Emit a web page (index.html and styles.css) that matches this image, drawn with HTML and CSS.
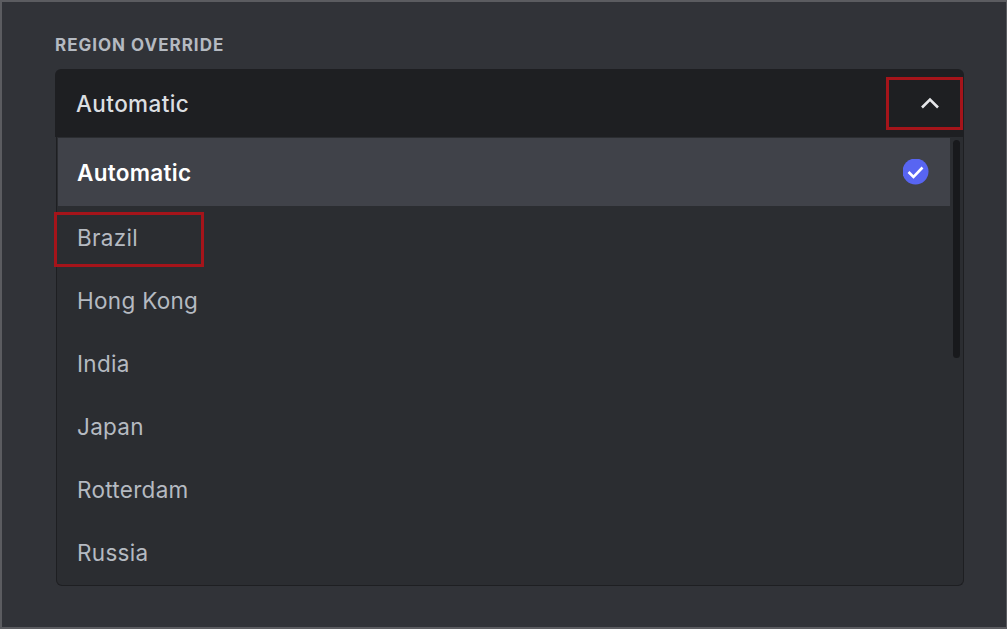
FILE: index.html
```html
<!DOCTYPE html>
<html lang="en">
<head>
  <meta charset="UTF-8" />
  <title>Region Override</title>
  <link rel="stylesheet" href="styles.css">
</head>
<body>
  <div class="Frame">
    <h2 class="Label">REGION OVERRIDE</h2>
    <div class="Select">
      <div class="Header">
        <span>Automatic</span>
        <svg class="Chevron" width="24" height="24" viewBox="0 0 24 24">
          <path d="M3 16.5 11 8.5 19 16.5" fill="none" stroke="#e6e7ea" stroke-width="2.6" />
        </svg>
      </div>
      <div class="List">
        <div class="Option selected">
          <span>Automatic</span>
          <svg width="26" height="26" viewBox="0 0 26 26">
            <circle cx="12.5" cy="12.5" r="13" fill="#5865f2" />
            <path d="M5.5 13 10.5 18 19.5 8.5" fill="none" stroke="#fff" stroke-width="2.6" />
          </svg>
        </div>
        <div class="Option">Brazil</div>
        <div class="Option">Hong Kong</div>
        <div class="Option">India</div>
        <div class="Option">Japan</div>
        <div class="Option">Rotterdam</div>
        <div class="Option">Russia</div>
        <div class="Scrollbar"></div>
      </div>
      <div class="Mark markArrow"></div>
      <div class="Mark markBrazil"></div>
    </div>
  </div>
</body>
</html>
```

FILE: styles.css
```css
* {
  margin: 0;
  padding: 0;
  box-sizing: border-box;
}

html, body {
  width: 1007px;
  height: 629px;
  overflow: hidden;
  background-color: #313338;
  font-family: Inter, sans-serif;
}

.Frame {
  width: 1007px;
  height: 629px;
  padding: 31px 41px 0 53px;
  background-color: #313338;
  border: 2px solid #5b5c60;
  border-right-width: 1px;
}

.Label {
  font-size: 17px;
  line-height: 24px;
  font-weight: 700;
  letter-spacing: 1px;
  color: #b5bac1;
  margin-bottom: 12px;
}

.Select {
  position: relative;
  width: 909px;
}

.Header {
  display: flex;
  justify-content: space-between;
  align-items: center;
  height: 68px;
  padding: 0 21px 0 21px;
  background-color: #1e1f22;
  border-radius: 6px 6px 0 0;
  font-size: 22.5px;
  font-weight: 500;
  letter-spacing: 0.4px;
  color: #dbdee1;
}

.List {
  position: relative;
  height: 449px;
  margin-left: 1px;
  padding: 1px 13px 0 1px;
  background-color: #2b2d31;
  border: 1px solid #1e1f22;
  border-top: none;
  border-radius: 0 0 6px 6px;
  overflow: hidden;
}

.Option {
  display: flex;
  align-items: center;
  justify-content: space-between;
  height: 63px;
  padding: 0 0 0 19px;
  font-size: 22.5px;
  letter-spacing: 0.3px;
  color: #b5bac1;
}

.Option.selected {
  height: 68px;
  padding-right: 21px;
  background-color: #404249;
  color: #fff;
  font-weight: 600;
}

.Scrollbar {
  position: absolute;
  top: 3px;
  right: 3px;
  width: 7px;
  height: 218px;
  background-color: #18191c;
  border-radius: 4px;
}

.Mark {
  position: absolute;
  border: 3px solid #a5141a;
}

.markArrow {
  top: 8px;
  left: 831px;
  width: 77px;
  height: 53px;
}

.markBrazil {
  top: 143px;
  left: -1px;
  width: 150px;
  height: 55px;
}
```
